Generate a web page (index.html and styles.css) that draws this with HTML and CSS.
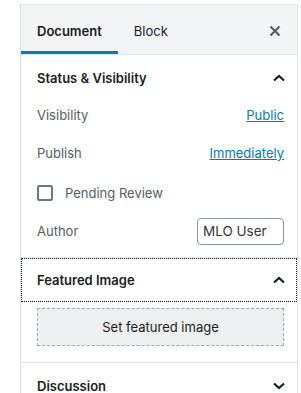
FILE: index.html
```
<!DOCTYPE html>
<html lang="en">
<head>
  <meta charset="UTF-8">
  <title>Document Settings</title>
  <link rel="stylesheet" href="styles.css">
</head>
<body>
  <div class="sidebar">
    <div class="tabs">
      <button class="tab active" type="button">Document</button>
      <button class="tab" type="button">Block</button>
      <button class="close-btn" type="button" aria-label="Close settings">
        <svg width="14" height="14" viewBox="0 0 14 14"><path d="M2.5 2.5l9 9M11.5 2.5l-9 9" stroke="#555d66" stroke-width="2.2" fill="none"/></svg>
      </button>
    </div>

    <div class="panel">
      <button class="panel-title" type="button">
        <span>Status &amp; Visibility</span>
        <svg class="chev" width="14" height="14" viewBox="0 0 14 14"><path d="M2 9.5L7 5l5 4.5" stroke="#191e23" stroke-width="2.2" fill="none"/></svg>
      </button>
      <div class="rows">
        <div class="row">
          <span class="label">Visibility</span>
          <a class="link" href="#">Public</a>
        </div>
        <div class="row">
          <span class="label">Publish</span>
          <a class="link" href="#">Immediately</a>
        </div>
        <div class="row row-check">
          <span class="checkbox"></span>
          <span class="label">Pending Review</span>
        </div>
        <div class="row">
          <span class="label">Author</span>
          <span class="author-input">MLO User</span>
        </div>
      </div>
    </div>

    <div class="panel">
      <button class="panel-title focused" type="button">
        <span>Featured Image</span>
        <svg class="chev" width="14" height="14" viewBox="0 0 14 14"><path d="M2 9.5L7 5l5 4.5" stroke="#191e23" stroke-width="2.2" fill="none"/></svg>
      </button>
      <div class="panel-body">
        <button class="featured-btn" type="button">Set featured image</button>
      </div>
    </div>

    <div class="panel">
      <button class="panel-title" type="button">
        <span>Discussion</span>
        <svg class="chev" width="14" height="14" viewBox="0 0 14 14"><path d="M2 4.5L7 9l5-4.5" stroke="#191e23" stroke-width="2.2" fill="none"/></svg>
      </button>
    </div>
  </div>
</body>
</html>
```

FILE: styles.css
```
:root {
  --text: #191e23;
  --label: #555d66;
  --border: #e2e4e7;
  --blue: #007cba;
  --font: 'Inter', 'Liberation Sans', Arial, sans-serif;
}
html, body {
  margin: 0;
  padding: 0;
  background: #fff;
  font-family: var(--font);
  font-size: 13px;
  color: var(--text);
  overflow: hidden;
}
.sidebar {
  margin: 4px 3px 0 20px;
  border: 1px solid var(--border);
  border-bottom: none;
  min-height: 400px;
}
.tabs {
  display: flex;
  align-items: stretch;
  height: 49px;
  background: #f3f4f5;
  border-bottom: 1px solid var(--border);
}
.tab {
  background: none;
  border: none;
  font-family: var(--font);
  font-size: 13px;
  color: var(--text);
  padding: 3px 16px 0 16px;
  cursor: pointer;
}
.tab.active {
  font-weight: 600;
  box-shadow: inset 0 -3px 0 var(--blue);
}
.close-btn {
  margin-left: auto;
  background: none;
  border: none;
  width: 36px;
  display: flex;
  align-items: center;
  justify-content: center;
  padding: 3px 8px 0 0;
  cursor: pointer;
}
.panel {
  border-bottom: 1px solid var(--border);
}
.panel-title {
  display: flex;
  align-items: center;
  justify-content: space-between;
  width: 100%;
  height: 46px;
  background: none;
  border: none;
  padding: 0 11px 0 16px;
  font-family: var(--font);
  font-size: 13px;
  font-weight: 600;
  color: var(--text);
  text-align: left;
  cursor: pointer;
}
.panel-title.focused {
  height: 44px;
  outline: 1px dotted #191e23;
  outline-offset: -1px;
}
.rows {
  display: flex;
  flex-direction: column;
  gap: 10px;
  padding: 0 13px 12px 16px;
}
.row {
  display: flex;
  align-items: center;
  justify-content: space-between;
  height: 28px;
}
.row-check {
  justify-content: flex-start;
  gap: 12px;
  margin-top: 2px;
}
.label {
  color: var(--label);
}
.link {
  color: var(--blue);
  text-decoration: underline;
}
.checkbox {
  width: 12px;
  height: 12px;
  border: 2px solid #6c7781;
  border-radius: 2px;
}
.author-input {
  box-sizing: border-box;
  height: 27px;
  width: 87px;
  border: 1px solid #8d96a0;
  border-radius: 4px;
  padding: 0 5px;
  display: flex;
  align-items: center;
  font-size: 13.5px;
  color: #32373c;
}
.panel-body {
  padding: 6px 13px 16px 16px;
}
.featured-btn {
  display: block;
  width: 100%;
  height: 38px;
  background: #edeff0;
  border: 1px dashed #a2aab2;
  font-family: var(--font);
  font-size: 13px;
  color: var(--text);
  cursor: pointer;
}
```
